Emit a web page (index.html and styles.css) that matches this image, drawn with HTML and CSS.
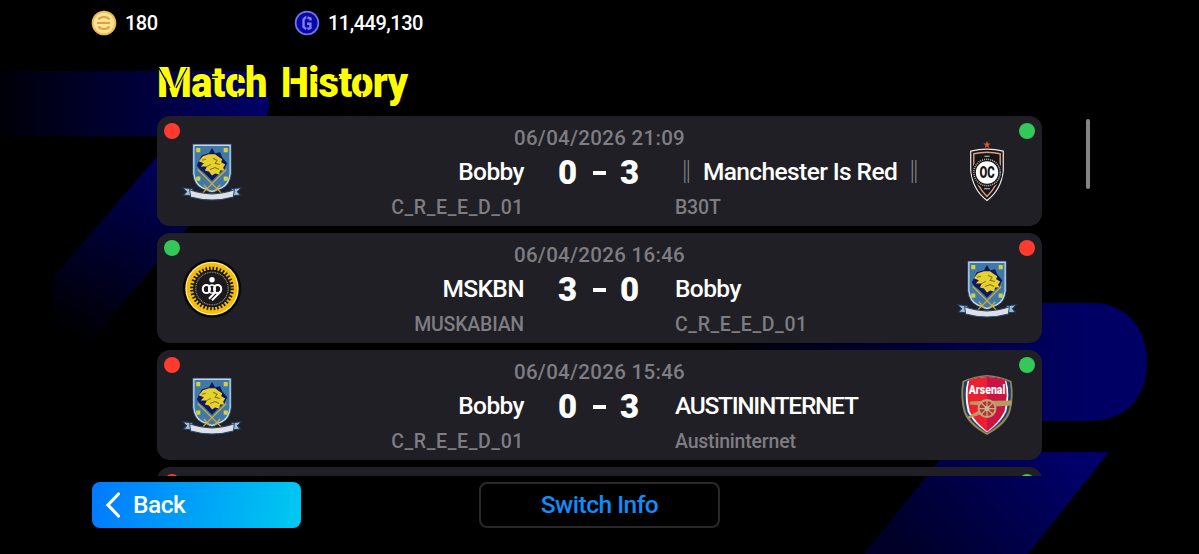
FILE: index.html
```
<!DOCTYPE html>
<html lang="en">
<head>
    <meta charset="UTF-8">
    <meta name="viewport" content="width=device-width, initial-scale=1.0">
    <title>Match History</title>
    <link rel="stylesheet" href="styles.css">
</head>
<body>
    <svg class="backdrop" viewBox="0 0 1199 554">
        <defs>
            <linearGradient id="bandFade" x1="0" x2="1" y1="0" y2="0">
                <stop offset="0" stop-color="#000008"/>
                <stop offset="1" stop-color="#000068"/>
            </linearGradient>
            <linearGradient id="legFade" gradientUnits="userSpaceOnUse" x1="200" y1="150" x2="90" y2="350">
                <stop offset="0" stop-color="#000068"/>
                <stop offset="1" stop-color="#000000"/>
            </linearGradient>
            <linearGradient id="hookFade" gradientUnits="userSpaceOnUse" x1="720" y1="0" x2="1080" y2="0">
                <stop offset="0" stop-color="#000000"/>
                <stop offset="1" stop-color="#000064"/>
            </linearGradient>
            <linearGradient id="footFade" gradientUnits="userSpaceOnUse" x1="1060" y1="452" x2="920" y2="570">
                <stop offset="0" stop-color="#000068"/>
                <stop offset="1" stop-color="#000028"/>
            </linearGradient>
        </defs>
        <path fill="url(#legFade)" d="M157 157 L268 120 L188 227 L72 362 H54 V276 Z"/>
        <path fill="url(#bandFade)" d="M0 71 H255 Q269 85 269 107 L262 136 H0 Z"/>
        <path fill="url(#hookFade)" d="M600 303 H1092 C1128 303 1147 330 1147 362 C1147 398 1125 421 1090 421 H600 Z"/>
        <path fill="url(#footFade)" d="M946 452 H1109 L1028 554 H864 Z"/>
    </svg>

    <header class="wallet">
        <div class="balance">
            <svg viewBox="0 0 26 26">
                <circle cx="13" cy="13" r="12.3" fill="#f0bf54"/>
                <circle cx="13" cy="13" r="10.3" fill="#ffe29a"/>
                <path d="M7.5 9.5 Q9 7 13 7 Q17 7 18.5 9.5 M6 13 H19 M7.5 16.5 Q9 19 13 19 Q17 19 18.5 16.5" fill="none" stroke="#d8a437" stroke-width="2.2"/>
            </svg>
            <span>180</span>
        </div>
        <div class="balance">
            <svg viewBox="0 0 26 26">
                <circle cx="13" cy="13" r="11.4" fill="#0909a8" stroke="#7773e8" stroke-width="1.7"/>
                <path d="M12.3 7.5 H11.5 L9.5 9.5 V17 L12.3 19 M13.5 7.5 L16.5 8.5 V10.5 M13 13.8 H16.4 V18 L13.5 19" fill="none" stroke="#827df0" stroke-width="2.4"/>
            </svg>
            <span>11,449,130</span>
        </div>
    </header>

    <main>
        <div class="heading">
            <h1>Match History</h1>
            <!-- stencil cuts in the title letters -->
            <svg class="cuts" viewBox="0 0 250 46">
                <path d="M2 8 L13 28 M30 8 L19 28 M54 17 H61 M81 14 V20 M81 33 V39 M133 6 V40 M158 22 L172 29 M177 17 H183 M205 13 V20 M205 33 V39" fill="none" stroke="#00000c" stroke-width="1.3"/>
            </svg>
        </div>
        <div class="matches" id="matches"></div>
        <div class="scrollbar"></div>
    </main>

    <footer>
        <button class="back">
            <svg viewBox="0 0 14 26"><path d="M12.5 2 L2 13 L12.5 24" fill="none" stroke="#fff" stroke-width="3.2" stroke-linecap="round"/></svg>
            <span>Back</span>
        </button>
        <button class="switch"><span>Switch Info</span></button>
    </footer>

    <svg class="sprites">
        <symbol id="lion" viewBox="0 0 60 60">
            <path d="M11 3 H49 V32 Q48 43 40 47 L30 51 L20 47 Q12 43 11 32 Z" fill="#c3d6e8" stroke="#163457" stroke-width=".8"/>
            <path d="M12.8 4.8 H47.2 V32 Q46 42 39 45.5 L30 49 L21 45.5 Q14 42 12.8 32 Z" fill="#3f79a8"/>
            <path d="M30 7 L33 12 L38 11 L40 16 L45 22 L42 28 L38 31 L30 39 L22 31 L18 28 L15 24 L17 20 L20 14 L27 12 Z" fill="#11185e"/>
            <path d="M17 20 L21 15 L27 13 L33 13 L37 16 L40 18 L39 21 L43 23 L41 26 L42 29 L38 29 L37 33 L33 32 L30 34 L27 30 L23 29 L25 25 L19 25 L22 22 Z" fill="#e7d12f"/>
            <path d="M20 19 L24 18 M25 25 L29 23 M31 17 L35 19 L33 22 L38 23 M28 28 L33 26 L37 28" fill="none" stroke="#85761d"/>
            <path d="M14.5 7 H18.5 V11 H14.5 Z M41.5 7 H45.5 V11 H41.5 Z M14.5 35 H18.5 V39 H14.5 Z M41.5 35 H45.5 V39 H41.5 Z" fill="#d8cf3e"/>
            <path d="M16 28 L39 51 M44 28 L21 51 M22 43 L28 50 M38 43 L32 50" fill="none" stroke="#d4aa35" stroke-width="1.3"/>
            <path d="M1 46 L11 47 V54 L2 53 L5 50 Z M59 46 L49 47 V54 L58 53 L55 50 Z" fill="#a9bbce" stroke="#173a61"/>
            <path d="M8 48 Q30 56 52 48 L51 55 Q30 61 9 55 Z" fill="#dfdfe5" stroke="#244a70"/>
        </symbol>
        <symbol id="orange" viewBox="0 0 60 60">
            <path d="M30 0 L31 2.5 H33.6 L31.5 4.2 L32.2 7 L30 5.4 L27.8 7 L28.5 4.2 L26.4 2.5 H29 Z" fill="#e95328"/>
            <path d="M30 8 Q38 8 46 10 V29 Q44 48 30 58.5 Q16 48 14 29 V10 Q22 8 30 8 Z" fill="#171617" stroke="#eeeae6" stroke-width="1.2"/>
            <path d="M30 11 Q37 11 43 12.5 V29 Q41 44 30 54.5 Q19 44 17 29 V12.5 Q23 11 30 11 Z" fill="none" stroke="#e29a82" stroke-width="1.4"/>
            <circle cx="30" cy="31" r="13" fill="none" stroke="#171617" stroke-width="4"/>
            <circle cx="30" cy="31" r="13" fill="none" stroke="#bdb5b1" stroke-width="1.5" stroke-dasharray="1 1"/>
            <circle cx="30" cy="31" r="11" fill="#fff"/>
            <path d="M27.5 15 H32.5 M27 47 H33" stroke="#ccc" stroke-width="1"/>
            <text x="30" y="36.7" text-anchor="middle" font-size="16" font-weight="900" textLength="15" lengthAdjust="spacingAndGlyphs" fill="#161616">OC</text>
        </symbol>
        <symbol id="sun" viewBox="0 0 60 60">
            <circle cx="30" cy="30" r="28.8" fill="#09090b"/>
            <circle cx="30" cy="30" r="26.3" fill="#ffe98f"/>
            <circle cx="30" cy="30" r="25" fill="#f4bd0b"/>
            <circle cx="30" cy="30" r="18.5" fill="#1b191b"/>
            <circle cx="30" cy="30" r="19.5" fill="none" stroke="#1b191b" stroke-width="4" stroke-dasharray="1.6 1.8"/>
            <circle cx="30" cy="30" r="16" fill="none" stroke="#8b8985" stroke-width="1.2" stroke-dasharray="1 .7"/>
            <circle cx="30" cy="21.5" r="2.7" fill="#fff"/>
            <rect x="21" y="26.5" width="7" height="8" rx="3.5" fill="none" stroke="#fff" stroke-width="2"/>
            <rect x="32" y="26.5" width="7" height="8" rx="3.5" fill="none" stroke="#fff" stroke-width="2"/>
            <rect x="26.8" y="26.5" width="6.4" height="8" rx="3.2" fill="none" stroke="#fff" stroke-width="1.4"/>
            <path d="M33 34 L27 40 M38.500 33 L30 41.500" fill="none" stroke="#fff" stroke-width="2"/>
        </symbol>
        <symbol id="cannon" viewBox="0 0 60 60">
            <path d="M30 0 Q43 1 54 6 Q57 21 53 36 Q49 49 30 59 Q11 49 7 36 Q3 21 6 6 Q17 1 30 0 Z" fill="#9b854f"/>
            <path d="M30 1.5 Q43 2 52.5 7 Q55 22 51 36 Q47 47 30 57 Q13 47 9 36 Q5 22 7.5 7 Q17 2 30 1.5 Z" fill="#173f73"/>
            <path d="M30 2 Q41 2.5 49 6 Q53 19 49 36 Q44 47 30 56.5 Q16 47 11 36 Q7 19 11 6 Q19 2.5 30 2 Z" fill="#fff"/>
            <path d="M30 2 Q40 2.5 47.5 5 Q51 20 47 36 Q42 46 30 55.5 Q18 46 13 36 Q9 20 12.5 5 Q20 2.5 30 2 Z" fill="#ed1f31"/>
            <path d="M30 2 Q40 2.5 47.5 5 Q51 20 47 36 Q42 46 30 55.5 Z" fill="#c91445"/>
            <path d="M13 26 L24 25.5 L54 25 V30 L38 31 V34 L25 38 L12 43 L11 41 L22 35 L23 30 L13 29 Z" fill="#b79a62"/>
            <circle cx="30" cy="33" r="8.3" fill="#b63038" stroke="#bba573" stroke-width="2"/>
            <path d="M22 33 H38 M30 25 V41 M24.5 27.5 L35.5 38.5 M35.5 27.5 L24.5 38.5" stroke="#c5b286" stroke-width="1.2"/>
            <circle cx="30" cy="33" r="2.5" fill="#c9b98e"/>
            <text x="30" y="18.5" text-anchor="middle" font-size="12" font-weight="900" textLength="36" lengthAdjust="spacingAndGlyphs" fill="#fff">Arsenal</text>
        </symbol>
    </svg>

    <script>
        const matches = [
            { time: '06/04/2026 21:09', score: [0, 3], home: ['Bobby', 'C_R_E_E_D_01', 'lion'], away: ['<i>‖</i> Manchester Is Red <i>‖</i>', 'B30T', 'orange'] },
            { time: '06/04/2026 16:46', score: [3, 0], home: ['MSKBN', 'MUSKABIAN', 'sun'], away: ['Bobby', 'C_R_E_E_D_01', 'lion'] },
            { time: '06/04/2026 15:46', score: [0, 3], home: ['Bobby', 'C_R_E_E_D_01', 'lion'], away: ['AUSTININTERNET', 'Austininternet', 'cannon'] }
        ];

        function side(name, team, won) {
            const caps = team[0].length > 6 && team[0] === team[0].toUpperCase();
            return `<div class="side ${name}">
                <span class="dot ${won ? 'win' : 'loss'}"></span>
                <svg class="crest"><use href="#${team[2]}"/></svg>
                <div class="names">
                    <div class="club ${caps ? 'caps' : ''}">${team[0]}</div>
                    <div class="user ${team[1].includes('_') ? 'wide' : ''}">${team[1]}</div>
                </div>
            </div>`;
        }

        // the last row is only peeking out under the list edge
        const nextRow = `
            <article class="match">
                <div class="side home"><span class="dot loss"></span></div>
                <div class="middle"></div>
                <div class="side away"><span class="dot win"></span></div>
            </article>`;

        document.getElementById('matches').innerHTML = matches.map(m => `
            <article class="match">
                ${side('home', m.home, m.score[0] > m.score[1])}
                <div class="middle">
                    <time>${m.time}</time>
                    <div class="score"><b>${m.score[0]}</b><span class="dash"></span><b>${m.score[1]}</b></div>
                </div>
                ${side('away', m.away, m.score[1] > m.score[0])}
            </article>`).join('') + nextRow;
    </script>
</body>
</html>
```
FILE: styles.css
```
* {
    box-sizing: border-box;
}
body {
    margin: 0;
    width: 1199px;
    height: 554px;
    overflow: hidden;
    background: #000;
    color: #fff;
    font-family: Roboto, "Liberation Sans", sans-serif;
    font-weight: 500;
    display: flex;
    flex-direction: column;
}
.backdrop {
    position: absolute;
    width: 1199px;
    height: 554px;
    z-index: -1;
}
.sprites {
    display: none;
}
.wallet {
    display: flex;
    height: 46px;
    padding-left: 91px;
}
.balance {
    display: flex;
    align-items: center;
    width: 203px;
    font-size: 20px;
    letter-spacing: -0.5px;
}
.balance svg {
    width: 26px;
    height: 26px;
    margin-right: 8px;
}
main {
    display: grid;
    grid-template-columns: 885px 4px;
    grid-template-rows: 70px 360px;
    column-gap: 44px;
    padding-left: 157px;
}
.heading {
    position: relative;
    grid-column: 1 / 3;
    padding-top: 14px;
}
h1 {
    margin: 0;
    color: #ff0;
    font-size: 42px;
    line-height: 46px;
    font-weight: 900;
    letter-spacing: -0.6px;
    word-spacing: 5px;
    white-space: nowrap;
    transform: scaleX(0.946);
    transform-origin: 0 0;
}
.cuts {
    position: absolute;
    top: 14px;
    left: 0;
    width: 250px;
    height: 46px;
}
.matches {
    overflow: hidden;
    display: flex;
    flex-direction: column;
    gap: 7px;
}
.match {
    flex: none;
    display: grid;
    grid-template-columns: 367px 151px 367px;
    height: 110px;
    background: #201f25;
    border-radius: 13px;
}
.side {
    position: relative;
    display: flex;
    padding: 25px 24px 0;
}
.away {
    flex-direction: row-reverse;
    padding-left: 0;
}
.home {
    padding-right: 0;
}
.dot {
    position: absolute;
    top: 7px;
    left: 7px;
    width: 16px;
    height: 16px;
    border-radius: 50%;
}
.away .dot {
    left: auto;
    right: 7px;
}
.win {
    background: #34c759;
}
.loss {
    background: #ff3b30;
}
.crest {
    flex: none;
    width: 62px;
    height: 61px;
}
.names {
    flex: 1;
    padding-top: 17px;
}
.home .names {
    text-align: right;
}
.club {
    font-size: 24.5px;
    line-height: 28px;
    letter-spacing: -0.6px;
    white-space: nowrap;
}
.club.caps {
    letter-spacing: -1.3px;
}
.club i {
    font-family: "Noto Sans CJK JP", sans-serif;
    font-style: normal;
    font-size: 23px;
    font-weight: 300;
    line-height: 20px;
    opacity: 0.6;
}
.user {
    margin-top: 10px;
    font-size: 19.5px;
    line-height: 24px;
    letter-spacing: -0.2px;
    color: #7e7d83;
}
.user.wide {
    letter-spacing: 0.6px;
}
.middle {
    display: flex;
    flex-direction: column;
    align-items: center;
}
time {
    height: 38px;
    padding-top: 10px;
    font-size: 20.5px;
    line-height: 24px;
    letter-spacing: 0.3px;
    color: #7e7d83;
    white-space: nowrap;
}
.score {
    display: flex;
    align-items: center;
    height: 36px;
    padding-right: 2px;
    font-size: 33px;
}
.score b {
    width: 20px;
    text-align: center;
    font-weight: 900;
}
.dash {
    width: 13px;
    height: 4px;
    margin: 1px 14px 0 15px;
    background: #fff;
}
.scrollbar {
    height: 70px;
    margin-top: 3px;
    border-radius: 2px;
    background: #858489;
}
footer {
    display: flex;
    gap: 178px;
    padding: 6px 0 0 92px;
}
button {
    height: 46px;
    padding: 0;
    border: 0;
    border-radius: 8px;
    color: #fff;
    font: 500 24.5px Roboto, "Liberation Sans", sans-serif;
    letter-spacing: -0.5px;
}
.back {
    display: flex;
    align-items: center;
    gap: 13px;
    width: 209px;
    padding-left: 14px;
    background: linear-gradient(105deg, #0079ff, #00caf0);
}
.back svg {
    width: 14px;
    height: 26px;
}
.back span {
    padding-bottom: 2px;
}
.switch {
    width: 241px;
    padding-bottom: 2px;
    border: 2px solid #29292b;
    background: #000;
    color: #128cf8;
}
```
